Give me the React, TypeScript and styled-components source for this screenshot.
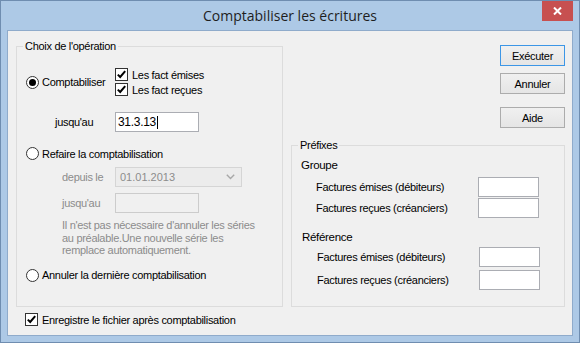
import React from "react";
import styled, { createGlobalStyle } from "styled-components";

const Global = createGlobalStyle`
  html, body { margin: 0; padding: 0; background: #ffffff; }
  * { box-sizing: border-box; }
`;

const Window = styled.div`
  width: 580px;
  height: 343px;
  border: 1px solid #6f8db0;
  background: #adc9e6;
  display: flex;
  flex-direction: column;
  font-family: "Liberation Sans", Arial, sans-serif;
  font-size: 11px;
  letter-spacing: -0.3px;
  color: #000;
`;

const TitleBar = styled.div`
  height: 29px;
  display: grid;
  grid-template-columns: 1fr auto 1fr;
  align-items: start;
`;

const Title = styled.div`
  grid-column: 2;
  font-family: "Open Sans", "Noto Sans", sans-serif;
  font-size: 14px;
  letter-spacing: 0;
  line-height: 29px;
  color: #1e1e1e;
`;

const CloseButton = styled.div`
  grid-column: 3;
  justify-self: end;
  width: 31px;
  height: 20px;
  margin-right: 6px;
  background: #c75050;
  display: flex;
  align-items: center;
  justify-content: center;
`;

const Client = styled.div`
  flex: 1;
  margin: 0 6px 6px 6px;
  border: 1px solid #8fabcb;
  background: #f0f0f0;
  padding: 9px 7px 0 8px;
  display: grid;
  grid-template-columns: 267px 274px;
  grid-template-rows: 267px auto;
  column-gap: 8px;
`;

const Group = styled.fieldset`
  margin: 0;
  padding: 0;
  min-width: 0;
  border: 1px solid #dcdcdc;
  display: flex;
  flex-direction: column;
`;

const Legend = styled.legend`
  margin-left: 6px;
  padding: 0 2px;
  line-height: 13px;
  font-size: 11px;
`;

const LeftBody = styled.div`
  padding: 14px 0 0 9px;
  display: flex;
  flex-direction: column;
`;

const OpRow = styled.div`
  display: flex;
  align-items: center;
`;

const RadioItem = styled.div<{ $width?: number; $mt?: number }>`
  display: flex;
  align-items: center;
  gap: 3px;
  height: 15px;
  width: ${(p) => (p.$width ? `${p.$width}px` : "auto")};
  margin-top: ${(p) => p.$mt ?? 0}px;
  white-space: nowrap;
`;

const RadioCircle = styled.span<{ $checked?: boolean }>`
  flex: none;
  width: 13px;
  height: 13px;
  border-radius: 50%;
  border: 1px solid #333333;
  background: #ffffff;
  display: inline-flex;
  align-items: center;
  justify-content: center;
  &::after {
    content: "";
    width: 7px;
    height: 7px;
    border-radius: 50%;
    background: ${(p) => (p.$checked ? "#000" : "transparent")};
  }
`;

const CheckList = styled.div`
  display: flex;
  flex-direction: column;
`;

const CheckItem = styled.div`
  display: flex;
  align-items: center;
  gap: 4px;
  height: 15px;
  white-space: nowrap;
`;

const CheckBox = styled.span`
  flex: none;
  width: 13px;
  height: 13px;
  border: 1px solid #333333;
  background: #ffffff;
  display: inline-flex;
  align-items: center;
  justify-content: center;
`;

const FieldRow = styled.div<{ $indent: number; $mt: number }>`
  display: flex;
  align-items: center;
  padding-left: ${(p) => p.$indent}px;
  margin-top: ${(p) => p.$mt}px;
`;

const FieldLabel = styled.span<{ $width: number; $disabled?: boolean }>`
  width: ${(p) => p.$width}px;
  flex: none;
  color: ${(p) => (p.$disabled ? "#8c8c8c" : "#000")};
  white-space: nowrap;
`;

const TextBox = styled.div<{ $width: number; $disabled?: boolean }>`
  width: ${(p) => p.$width}px;
  height: 20px;
  flex: none;
  border: 1px solid ${(p) => (p.$disabled ? "#cccccc" : "#abadb3")};
  background: ${(p) => (p.$disabled ? "#f0f0f0" : "#ffffff")};
  padding-left: 2px;
  display: flex;
  align-items: center;
  font-size: 12px;
  letter-spacing: -0.3px;
`;

const Caret = styled.span`
  display: inline-block;
  width: 1px;
  height: 13px;
  background: #000;
  margin-left: 1px;
`;

const Combo = styled.div`
  width: 127px;
  height: 20px;
  flex: none;
  border: 1px solid #d5d5d5;
  background: #ececec;
  padding: 0 6px 0 4px;
  display: flex;
  align-items: center;
  justify-content: space-between;
  color: #8c8c8c;
  font-size: 11px;
  letter-spacing: 0;
`;

const Note = styled.p`
  margin: 6px 0 0 0;
  padding-left: 36px;
  line-height: 12.5px;
  color: #8c8c8c;
  white-space: nowrap;
`;

const RightColumn = styled.div`
  display: flex;
  flex-direction: column;
`;

const ButtonStack = styled.div`
  align-self: flex-end;
  padding-top: 5px;
  display: flex;
  flex-direction: column;
`;

const Button = styled.div<{ $default?: boolean; $mt?: number }>`
  width: 65px;
  height: 21px;
  margin-top: ${(p) => p.$mt ?? 0}px;
  border: 1px solid ${(p) => (p.$default ? "#3c96e6" : "#acacac")};
  background: linear-gradient(#f0f0f0, #e5e5e5);
  display: flex;
  align-items: center;
  justify-content: center;
`;

const PrefixGroup = styled(Group)`
  flex: 1;
  margin-top: 11px;
`;

const RightBody = styled.div`
  padding: 7px 25px 0 9px;
  display: flex;
  flex-direction: column;
`;

const SubTitle = styled.div<{ $mt: number; $shift?: number }>`
  line-height: 13px;
  font-size: 11.5px;
  letter-spacing: -0.3px;
  margin-top: ${(p) => p.$mt}px;
  padding-left: ${(p) => p.$shift ?? 0}px;
`;

const PrefixRow = styled.div<{ $mt: number; $shift?: number }>`
  display: flex;
  align-items: center;
  justify-content: space-between;
  margin-top: ${(p) => p.$mt}px;
  padding-left: ${(p) => 15 + (p.$shift ?? 0)}px;
  margin-right: ${(p) => -(p.$shift ?? 0)}px;
`;

const BottomRow = styled.div`
  grid-column: 1 / -1;
  margin-top: 5px;
  padding-left: 9px;
  display: flex;
`;

const Check = () => (
  <CheckBox>
    <svg width="11" height="11" viewBox="0 0 11 11">
      <path d="M1.8 5.6 L4.2 8 L9.2 2.2" fill="none" stroke="#000" strokeWidth="2" />
    </svg>
  </CheckBox>
);

const Chevron = () => (
  <svg width="9" height="6" viewBox="0 0 9 6">
    <path d="M0.8 0.8 L4.5 4.5 L8.2 0.8" fill="none" stroke="#a8a8a8" strokeWidth="1.4" />
  </svg>
);

export default function App() {
  return (
    <>
      <Global />
      <Window>
        <TitleBar>
          <Title>Comptabiliser les écritures</Title>
          <CloseButton>
            <svg width="9" height="8" viewBox="0 0 9 8">
              <path d="M1 0.5 L8 7.5 M8 0.5 L1 7.5" stroke="#fff" strokeWidth="2" />
            </svg>
          </CloseButton>
        </TitleBar>
        <Client>
          <Group>
            <Legend>Choix de l'opération</Legend>
            <LeftBody>
              <OpRow>
                <RadioItem $width={89}>
                  <RadioCircle $checked />
                  <span>Comptabiliser</span>
                </RadioItem>
                <CheckList>
                  <CheckItem>
                    <Check />
                    <span>Les fact émises</span>
                  </CheckItem>
                  <CheckItem>
                    <Check />
                    <span>Les fact reçues</span>
                  </CheckItem>
                </CheckList>
              </OpRow>
              <FieldRow $indent={29} $mt={15}>
                <FieldLabel $width={60}>jusqu'au</FieldLabel>
                <TextBox $width={84}>
                  31.3.13<Caret />
                </TextBox>
              </FieldRow>
              <RadioItem $mt={14}>
                <RadioCircle />
                <span>Refaire la comptabilisation</span>
              </RadioItem>
              <FieldRow $indent={36} $mt={6}>
                <FieldLabel $width={53} $disabled>
                  depuis le
                </FieldLabel>
                <Combo>
                  <span>01.01.2013</span>
                  <Chevron />
                </Combo>
              </FieldRow>
              <FieldRow $indent={36} $mt={6}>
                <FieldLabel $width={53} $disabled>
                  jusqu'au
                </FieldLabel>
                <TextBox $width={84} $disabled />
              </FieldRow>
              <Note>
                Il n'est pas nécessaire d'annuler les séries
                <br />
                au préalable.Une nouvelle série les
                <br />
                remplace automatiquement.
              </Note>
              <RadioItem $mt={11}>
                <RadioCircle />
                <span>Annuler la dernière comptabilisation</span>
              </RadioItem>
            </LeftBody>
          </Group>
          <RightColumn>
            <ButtonStack>
              <Button $default>Exécuter</Button>
              <Button $mt={7}>Annuler</Button>
              <Button $mt={13}>Aide</Button>
            </ButtonStack>
            <PrefixGroup>
              <Legend>Préfixes</Legend>
              <RightBody>
                <SubTitle $mt={0}>Groupe</SubTitle>
                <PrefixRow $mt={5}>
                  <span>Factures émises (débiteurs)</span>
                  <TextBox $width={61} />
                </PrefixRow>
                <PrefixRow $mt={1}>
                  <span>Factures reçues (créanciers)</span>
                  <TextBox $width={61} />
                </PrefixRow>
                <SubTitle $mt={13} $shift={1}>
                  Référence
                </SubTitle>
                <PrefixRow $mt={3} $shift={1}>
                  <span>Factures émises (débiteurs)</span>
                  <TextBox $width={61} />
                </PrefixRow>
                <PrefixRow $mt={3} $shift={1}>
                  <span>Factures reçues (créanciers)</span>
                  <TextBox $width={61} />
                </PrefixRow>
              </RightBody>
            </PrefixGroup>
          </RightColumn>
          <BottomRow>
            <CheckItem>
              <Check />
              <span>Enregistre le fichier après comptabilisation</span>
            </CheckItem>
          </BottomRow>
        </Client>
      </Window>
    </>
  );
}
